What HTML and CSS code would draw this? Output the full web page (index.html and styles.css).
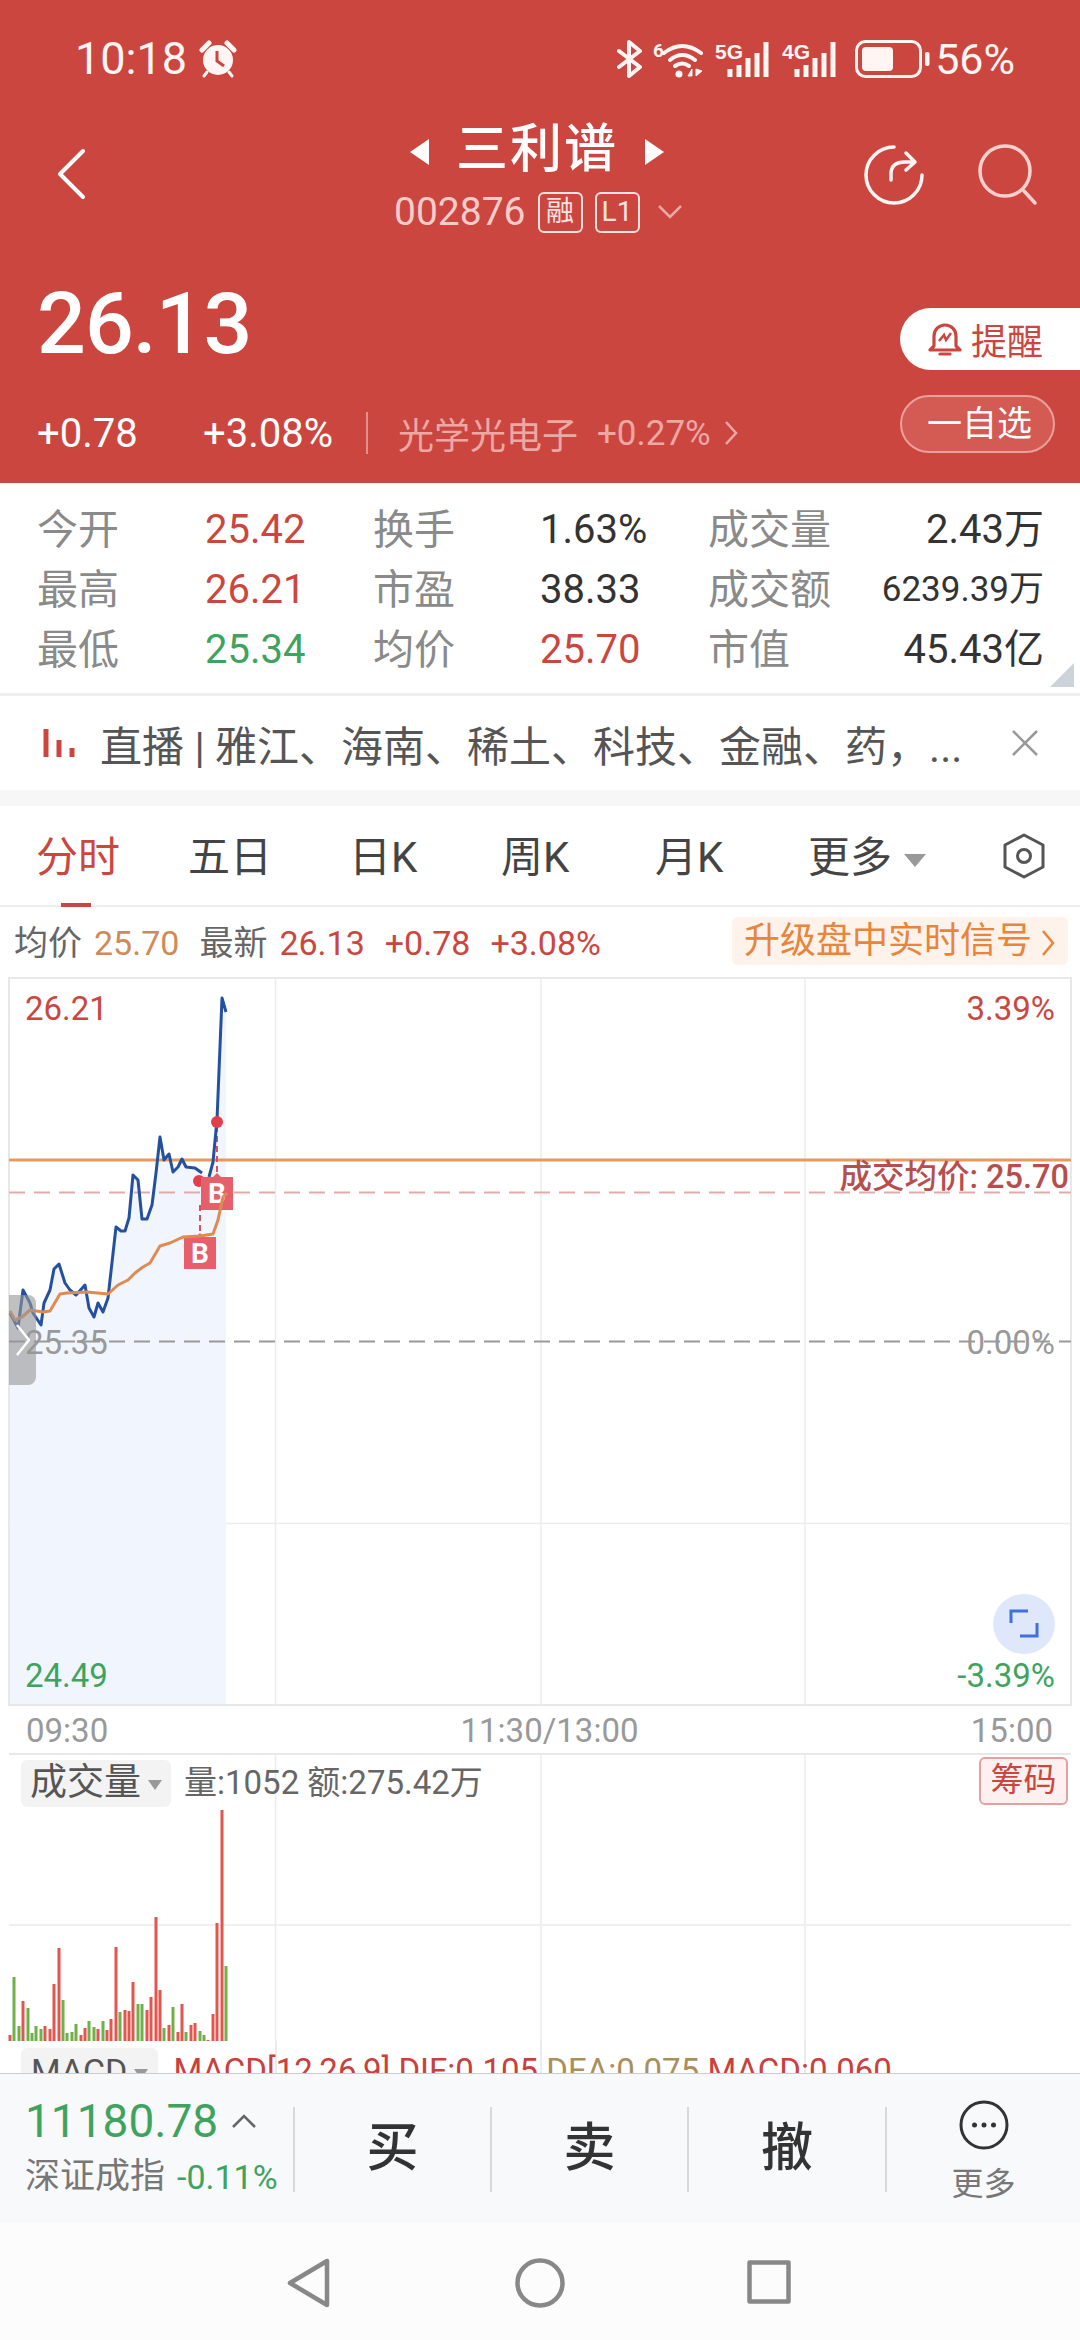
FILE: index.html
```html
<!DOCTYPE html>
<html lang="zh-CN">
<head>
  <meta charset="UTF-8" />
  <meta name="viewport" content="width=device-width, initial-scale=1.0"/>
  <title>三利谱 002876</title>
  <link rel="stylesheet" href="styles.css">
</head>
<body>
  <!-- Red quote header -->
  <div class="quote-head">
    <div class="statusbar">
      <div class="status-left">
        <span class="clock">10:18</span>
        <svg class="alarm" width="38" height="38" viewBox="0 0 38 38">
          <circle cx="19" cy="20" r="15" fill="#fff5f3"/>
          <path d="M3 10 L10 3 M35 10 L28 3" stroke="#fff5f3" stroke-width="5" stroke-linecap="round"/>
          <path d="M8 32 L5 36 M30 32 L33 36" stroke="#fff5f3" stroke-width="3" stroke-linecap="round"/>
          <path d="M18 11 V21 L25 26" stroke="#cc4640" stroke-width="3" fill="none"/>
        </svg>
      </div>
      <div class="status-right">
        <svg class="st-bt" width="26" height="38" viewBox="0 0 26 38">
          <path d="M2 11 L23 27 L12 36 V2 L23 11 L2 27" fill="none" stroke="#fff5f3" stroke-width="4" stroke-linejoin="round" stroke-linecap="round"/>
        </svg>
        <svg class="st-wifi" width="52" height="38" viewBox="0 0 52 38">
          <text x="1" y="17" class="st-small">6</text>
          <path d="M12 13 Q30 -1 49 13" fill="none" stroke="#fff5f3" stroke-width="4" stroke-linecap="round"/>
          <path d="M18 20 Q30 10 43 20" fill="none" stroke="#fff5f3" stroke-width="4" stroke-linecap="round"/>
          <path d="M23 26 Q30 21 37 26" fill="none" stroke="#fff5f3" stroke-width="4" stroke-linecap="round"/>
          <circle cx="27" cy="34" r="3.5" fill="#fff5f3"/>
          <path d="M36 36 L40 29 V36 Z M44 29 V36 L50 31 Z" fill="#fff5f3" stroke="#fff5f3"/>
        </svg>
        <svg class="st-sig" width="58" height="38" viewBox="0 0 58 38">
          <text x="0" y="19" class="st-net">5G</text>
          <path d="M15 37 V29 M24 37 V25 M33 37 V18 M42 37 V13 M51 37 V2" stroke="#fff5f3" stroke-width="5"/>
        </svg>
        <svg class="st-sig" width="58" height="38" viewBox="0 0 58 38">
          <text x="0" y="19" class="st-net">4G</text>
          <path d="M15 37 V29 M24 37 V25 M33 37 V18 M42 37 V13 M51 37 V2" stroke="#fff5f3" stroke-width="5"/>
        </svg>
        <svg class="st-bat" width="76" height="38" viewBox="0 0 76 38">
          <rect x="1.5" y="1.5" width="64" height="35" rx="9" fill="none" stroke="#fff5f3" stroke-width="3"/>
          <rect x="7" y="7" width="31" height="24" rx="4" fill="#fff5f3"/>
          <rect x="70" y="12" width="4.5" height="14" rx="2" fill="#fff5f3"/>
        </svg>
        <span class="battery-num">56%</span>
      </div>
    </div>

    <div class="titlebar">
      <svg class="back" width="32" height="52" viewBox="0 0 32 52">
        <path d="M28 3 L5 26 L28 49" fill="none" stroke="#fff" stroke-width="4" stroke-linecap="round" stroke-linejoin="round"/>
      </svg>
      <div class="title-mid">
        <div class="title-name">
          <span class="tri-left"></span>
          <span class="name">三利谱</span>
          <span class="tri-right"></span>
        </div>
        <div class="title-code">
          <span class="code">002876</span>
          <span class="tag">融</span>
          <span class="tag">L1</span>
          <svg width="24" height="14" viewBox="0 0 24 14"><path d="M1 1 L12 12 L23 1" fill="none" stroke="#eda8a4" stroke-width="2.5"/></svg>
        </div>
      </div>
      <svg class="share" width="62" height="62" viewBox="0 0 62 62">
        <path d="M31 3 A28 28 0 1 0 59 31" fill="none" stroke="#fff5f3" stroke-width="3.5" stroke-linecap="round"/>
        <path d="M28 36 V30 Q28 18 42 18 H50 M43 9 L52 18 L43 26" fill="none" stroke="#fff5f3" stroke-width="3.5" stroke-linecap="round" stroke-linejoin="round"/>
      </svg>
      <svg class="search" width="62" height="62" viewBox="0 0 62 62">
        <circle cx="28" cy="27" r="25" fill="none" stroke="#f9d0cd" stroke-width="3.5"/>
        <path d="M47 47 L58 59" stroke="#f9d0cd" stroke-width="3.5" stroke-linecap="round"/>
      </svg>
    </div>

    <div class="price-wrap">
      <div class="price-left">
        <div class="price">26.13</div>
        <div class="change-row">
          <span class="chg-a">+0.78</span>
          <span class="chg-b">+3.08%</span>
          <span class="chg-line"></span>
          <span class="sector">光学光电子</span>
          <span class="sector-pct">+0.27%</span>
          <svg width="14" height="24" viewBox="0 0 14 24"><path d="M2 1 L12 12 L2 23" fill="none" stroke="#eda8a4" stroke-width="2.5"/></svg>
        </div>
      </div>
      <div class="price-right">
        <div class="remind">
          <svg width="34" height="36" viewBox="0 0 34 36">
            <path d="M6 25 V15 A11 11 0 0 1 28 15 V25 L32 29 H2 Z" fill="none" stroke="#cc4640" stroke-width="3.2" stroke-linejoin="round"/>
            <path d="M12 33 H22" stroke="#cc4640" stroke-width="3.2" stroke-linecap="round"/>
            <path d="M11 20 L16 14 L18 19 L23 12" fill="none" stroke="#cc4640" stroke-width="2.5"/>
          </svg>
          <span>提醒</span>
        </div>
        <div class="watch">一自选</div>
      </div>
    </div>
  </div>

  <!-- Day statistics -->
  <div class="stats">
    <span class="lb">今开</span><span class="val red">25.42</span>
    <span class="lb">换手</span><span class="val">1.63%</span>
    <span class="lb">成交量</span><span class="val end">2.43万</span>
    <span class="lb">最高</span><span class="val red">26.21</span>
    <span class="lb">市盈</span><span class="val">38.33</span>
    <span class="lb">成交额</span><span class="val end small">6239.39万</span>
    <span class="lb">最低</span><span class="val green">25.34</span>
    <span class="lb">均价</span><span class="val red">25.70</span>
    <span class="lb">市值</span><span class="val end">45.43亿</span>
    <span class="corner"></span>
  </div>

  <!-- Live banner -->
  <div class="live">
    <svg width="34" height="30" viewBox="0 0 34 30">
      <path d="M3 1 V29 M16 12 V29 M29 20 V29" stroke="#cc4640" stroke-width="5"/>
    </svg>
    <span class="live-text">直播 | 雅江、海南、稀土、科技、金融、药，...</span>
    <svg class="live-x" width="28" height="26" viewBox="0 0 28 26">
      <path d="M2 1 L26 25 M26 1 L2 25" stroke="#999" stroke-width="2.5"/>
    </svg>
  </div>
  <div class="band"></div>

  <!-- Period tabs -->
  <div class="tabs">
    <span class="tab active">分时</span>
    <span class="tab">五日</span>
    <span class="tab">日K</span>
    <span class="tab">周K</span>
    <span class="tab">月K</span>
    <span class="tab more">更多<i class="drop"></i></span>
    <svg class="hex" width="44" height="46" viewBox="0 0 44 46">
      <path d="M22 2 L41 12 V34 L22 44 L3 34 V12 Z" fill="none" stroke="#555" stroke-width="3" stroke-linejoin="round"/>
      <circle cx="22" cy="23" r="6.5" fill="none" stroke="#555" stroke-width="3"/>
    </svg>
  </div>

  <div class="inforow">
    <span class="gray">均价</span><span class="orange">25.70</span>
    <span class="gray">最新</span><span class="red">26.13</span>
    <span class="red">+0.78</span>
    <span class="red">+3.08%</span>
    <span class="upgrade">升级盘中实时信号
      <svg width="14" height="26" viewBox="0 0 14 26"><path d="M2 1 L12 13 L2 25" fill="none" stroke="#e8843c" stroke-width="2.5"/></svg>
    </span>
  </div>

  <!-- Intraday price chart, drawn in page coordinates -->
  <div class="chart">
    <svg class="chart-svg" width="1080" height="729" viewBox="0 977 1080 729">
      <path class="frame" d="M9 978 H1071 V1705 H9 Z"/>
      <path class="grid" d="M275.5 978 V1705 M541 978 V1705 M805 978 V1705 M9 1523.5 H1071"/>
      <path class="area" d="M10 1313 L18 1328 L23 1290 L30 1303 L33 1313 L41 1325 L44 1303 L50 1290 L54 1269 L59 1264 L65 1283 L70 1290 L76 1295 L85 1285 L89 1308 L94 1317 L98 1303 L103 1312 L108 1298 L116 1227 L121 1231 L125 1231 L129 1218 L133 1175 L138 1180 L142 1219 L147 1219 L152 1205 L156 1173 L160 1137 L164 1160 L169 1154 L173 1172 L178 1167 L182 1159 L186 1167 L195 1168 L202 1173 L209 1177 L213 1162 L217 1120 L222 998 L226 1012 V1704 H10 Z"/>
      <path class="avg-level" d="M9 1160 H1071"/>
      <path class="cost-level" d="M9 1192.5 H1071"/>
      <path class="zero-level" d="M9 1341.5 H1071"/>
      <path class="link" d="M217 1126 V1180 M200 1205 V1238"/>
      <path class="price-line" d="M10 1313 L18 1328 L23 1290 L30 1303 L33 1313 L41 1325 L44 1303 L50 1290 L54 1269 L59 1264 L65 1283 L70 1290 L76 1295 L85 1285 L89 1308 L94 1317 L98 1303 L103 1312 L108 1298 L116 1227 L121 1231 L125 1231 L129 1218 L133 1175 L138 1180 L142 1219 L147 1219 L152 1205 L156 1173 L160 1137 L164 1160 L169 1154 L173 1172 L178 1167 L182 1159 L186 1167 L195 1168 L202 1173 M209 1177 L213 1162 L217 1120 L222 998 L226 1012"/>
      <circle class="dot" cx="199" cy="1181" r="6"/>
      <circle class="dot" cx="217" cy="1122" r="6"/>
      <g class="mark">
        <path d="M201 1177 H213 L217 1173 L221 1177 H233 V1210 H201 Z"/>
        <path d="M184 1237 H196 L200 1233 L204 1237 H216 V1269 H184 Z"/>
      </g>
      <text class="mark-b" x="217" y="1203">B</text>
      <text class="mark-b" x="200" y="1263">B</text>
      <path class="avg-line" d="M10 1311 L15 1320 L22 1317 L30 1310 L43 1312 L50 1311 L60 1294 L67 1293 L87 1292 L108 1294 L118 1285 L128 1280 L135 1273 L143 1267 L150 1263 L160 1246 L170 1243 L183 1237 L200 1236 L213 1234 L218 1220 L223 1197 L227 1193"/>
    </svg>
    <span class="axis left top red">26.21</span>
    <span class="axis right top red">3.39%</span>
    <span class="cost-tag">成交均价: 25.70</span>
    <span class="axis left mid gray">25.35</span>
    <span class="axis right mid gray">0.00%</span>
    <span class="axis left low green">24.49</span>
    <span class="axis right low green">-3.39%</span>
    <div class="handle">
      <svg width="16" height="34" viewBox="0 0 16 34"><path d="M2 2 L14 17 L2 32" fill="none" stroke="#fff" stroke-width="2.5"/></svg>
    </div>
    <div class="expand">
      <svg width="30" height="30" viewBox="0 0 30 30">
        <path d="M2 14 V2 H19 M28 14 V27 H11" fill="none" stroke="#3f6fe0" stroke-width="3"/>
      </svg>
    </div>
  </div>

  <div class="times">
    <span>09:30</span>
    <span>11:30/13:00</span>
    <span>15:00</span>
  </div>

  <!-- Volume panel -->
  <div class="volume">
    <svg class="volume-svg" width="1080" height="288" viewBox="0 1753 1080 288">
      <path class="frame-top" d="M9 1754 H1071"/>
      <path class="grid" d="M275.5 1754 V2041 M541 1754 V2041 M805 1754 V2041 M9 1925 H1071"/>
      <path class="bar-up" d="M10 2043v-8M23 2043v-42M45 2043v-17M50 2043v-14M54 2043v-59M59 2043v-95M81 2043v-8M85 2043v-15M98 2043v-14M107 2043v-13M111 2043v-24M116 2043v-96M125 2043v-33M129 2043v-32M133 2043v-61M147 2043v-33M151 2043v-46M156 2043v-126M160 2043v-53M169 2043v-18M178 2043v-11M182 2043v-39M191 2043v-18M195 2043v-20M208 2043v-3M213 2043v-29M217 2043v-120M222 2043v-233"/>
      <path class="bar-down" d="M14 2043v-66M19 2043v-17M28 2043v-35M32 2043v-10M36 2043v-17M41 2043v-14M63 2043v-43M67 2043v-10M72 2043v-11M76 2043v-19M89 2043v-22M94 2043v-16M103 2043v-22M120 2043v-31M138 2043v-39M142 2043v-39M164 2043v-15M173 2043v-36M186 2043v-11M200 2043v-12M204 2043v-8M226 2043v-77"/>
    </svg>
    <div class="vol-head">
      <span class="selector">成交量<i class="drop small-drop"></i></span>
      <span class="vol-text">量:1052 额:275.42万</span>
      <span class="chips">筹码</span>
    </div>
  </div>

  <!-- MACD panel, cut off by the toolbar -->
  <div class="macd">
    <span class="selector macd-sel">MACD<i class="drop small-drop"></i></span>
    <span class="macd-text"><span class="m-red">MACD[12,26,9] DIF:0.105</span> <span class="m-tan">DEA:0.075</span> <span class="m-red">MACD:0.060</span></span>
  </div>

  <!-- Bottom toolbar -->
  <div class="toolbar">
    <div class="index-box">
      <div class="index-top">
        <span class="index-num">11180.78</span>
        <svg width="24" height="14" viewBox="0 0 24 14"><path d="M1 13 L12 2 L23 13" fill="none" stroke="#666" stroke-width="2.5"/></svg>
      </div>
      <div class="index-sub"><span class="index-name">深证成指</span><span class="index-pct">-0.11%</span></div>
    </div>
    <div class="trade">买</div>
    <div class="trade">卖</div>
    <div class="trade">撤</div>
    <div class="more-box">
      <svg width="50" height="50" viewBox="0 0 50 50">
        <circle cx="25" cy="25" r="23" fill="none" stroke="#333" stroke-width="3"/>
        <circle cx="15.5" cy="25" r="2.5" fill="#333"/><circle cx="25" cy="25" r="2.5" fill="#333"/><circle cx="34.5" cy="25" r="2.5" fill="#333"/>
      </svg>
      <span>更多</span>
    </div>
  </div>

  <!-- System navigation -->
  <div class="sysnav">
    <svg width="44" height="50" viewBox="0 0 44 50"><path d="M40 3 V47 L3 25 Z" fill="none" stroke="#888" stroke-width="4.5" stroke-linejoin="round"/></svg>
    <svg width="50" height="50" viewBox="0 0 50 50"><circle cx="25" cy="25" r="22.5" fill="none" stroke="#888" stroke-width="4.5"/></svg>
    <svg width="44" height="44" viewBox="0 0 44 44"><path d="M2.5 2.5 H41.5 V41.5 H2.5 Z" fill="none" stroke="#888" stroke-width="4.5" stroke-linejoin="round"/></svg>
  </div>
</body>
</html>
```

FILE: styles.css
```css
* {
  box-sizing: border-box;
}

body {
  margin: 0;
  width: 1080px;
  height: 2340px;
  overflow: hidden;
  background: #fff;
  font-family: Roboto, "Noto Sans CJK SC", sans-serif;
  color: #333;
}

.red { color: #cc4640; }
.green { color: #3fa35f; }
.gray { color: #666; }
.orange { color: #d08a5a; }

/* header */
.quote-head {
  height: 483px;
  background: #cc4640;
  color: #fff;
}
.statusbar {
  height: 98px;
  padding: 40px 65px 0 75px;
  display: flex;
  justify-content: space-between;
}
.status-left {
  display: flex;
  align-items: center;
  gap: 12px;
  height: 38px;
}
.clock {
  font-size: 45px;
  line-height: 38px;
  color: #fff5f3;
}
.status-right {
  display: flex;
  align-items: center;
  height: 38px;
}
.st-wifi { margin-left: 9px; }
.st-sig { margin-left: 11px; }
.st-sig + .st-sig { margin-left: 9px; }
.st-bat { margin-left: 15px; }
.st-small {
  font: 700 19px Roboto, sans-serif;
  fill: #fff5f3;
}
.st-net {
  font: 700 21px "Liberation Sans", sans-serif;
  fill: #fff5f3;
}
.battery-num {
  margin-left: 4px;
  font-size: 43px;
  line-height: 38px;
  color: #fff5f3;
}

.titlebar {
  height: 134px;
  position: relative;
  display: flex;
  padding-left: 55px;
}
.back { margin-top: 50px; }
.title-mid {
  position: absolute;
  left: 394px;
  top: 24px;
}
.title-name {
  display: flex;
  align-items: center;
  gap: 27px;
  margin-left: 16px;
  height: 56px;
}
.tri-left, .tri-right {
  width: 0;
  height: 0;
  margin-top: 4px;
  border-top: 13px solid transparent;
  border-bottom: 13px solid transparent;
}
.tri-left { border-right: 19px solid #fff; }
.tri-right { border-left: 19px solid #fff; }
.name {
  font-size: 52px;
  line-height: 56px;
  font-weight: 500;
  letter-spacing: 2px;
}
.title-code {
  display: flex;
  align-items: center;
  gap: 12px;
  margin-top: 13px;
}
.code {
  font-size: 39px;
  line-height: 42px;
  color: #f6cdca;
}
.tag {
  width: 45px;
  height: 41px;
  border: 2px solid #fbe3e1;
  border-radius: 6px;
  font-size: 28px;
  line-height: 36px;
  text-align: center;
  color: #fbe3e1;
}
.title-code svg { margin-left: 6px; }
.share { position: absolute; left: 863px; top: 46px; }
.search { position: absolute; left: 977px; top: 46px; }

.price-wrap {
  display: flex;
  justify-content: space-between;
}
.price {
  margin: 47px 0 0 37px;
  font-size: 86px;
  line-height: 90px;
  font-weight: 500;
  letter-spacing: -1px;
}
.change-row {
  display: flex;
  align-items: center;
  margin: 44px 0 0 37px;
  height: 40px;
}
.chg-a { font-size: 40px; width: 166px; }
.chg-b { font-size: 40px; width: 163px; }
.chg-line {
  width: 2px;
  height: 42px;
  background: #e58f8a;
  margin-right: 30px;
}
.sector {
  font-size: 36px;
  color: #eda8a4;
}
.sector-pct {
  font-size: 35px;
  color: #eda8a4;
  margin: 0 13px 0 19px;
}
.price-right {
  width: 180px;
  padding-top: 76px;
}
.remind {
  height: 62px;
  background: #fff;
  border-radius: 31px 0 0 31px;
  display: flex;
  align-items: center;
  gap: 9px;
  padding-left: 28px;
  color: #cc4640;
  font-size: 36px;
}
.watch {
  width: 155px;
  height: 58px;
  margin-top: 25px;
  padding-left: 4px;
  border: 2px solid #ec9f9b;
  border-radius: 29px;
  background: #d45a54;
  text-align: center;
  font-size: 35px;
  line-height: 56px;
}

/* stats */
.stats {
  position: relative;
  height: 213px;
  padding: 17px 0 0 37px;
  border-bottom: 3px solid #eee;
  display: grid;
  grid-template-columns: 168px 168px 167px 168px 130px 206px;
  grid-auto-rows: 60px;
  align-items: center;
}
.lb {
  font-size: 41px;
  line-height: 50px;
  color: #8a8a8a;
  white-space: nowrap;
}
.val {
  font-size: 40px;
  line-height: 50px;
  color: #333;
}
.val.red { color: #cc4640; }
.val.green { color: #3fa35f; }
.val.end { text-align: right; }
.val.small { font-size: 35px; }
.corner {
  position: absolute;
  right: 6px;
  bottom: 6px;
  width: 24px;
  height: 24px;
  background: #ccd3da;
  clip-path: polygon(100% 0, 100% 100%, 0 100%);
}

/* banner */
.live {
  height: 94px;
  display: flex;
  align-items: center;
  padding-left: 43px;
}
.live-text {
  margin-left: 23px;
  font-size: 42px;
  color: #555;
  white-space: nowrap;
}
.live-x { margin-left: auto; margin-right: 41px; }
.band {
  height: 16px;
  background: #f7f7f7;
}

/* tabs */
.tabs {
  position: relative;
  height: 101px;
  padding: 23px 0 0 36px;
  border-bottom: 2px solid #eee;
  display: grid;
  grid-template-columns: 152px 161px 152px 154px 153px 1fr;
  align-items: start;
}
.tab {
  font-size: 42px;
  line-height: 58px;
  color: #444;
  position: relative;
  white-space: nowrap;
}
.tab.active { color: #cc4640; }
.tab.active::after {
  content: "";
  position: absolute;
  left: 25px;
  top: 74px;
  width: 30px;
  height: 4px;
  background: #cc4640;
}
.drop {
  display: inline-block;
  width: 0;
  height: 0;
  margin-left: 12px;
  vertical-align: middle;
  border-left: 11px solid transparent;
  border-right: 11px solid transparent;
  border-top: 13px solid #999;
}
.small-drop {
  margin-left: 7px;
  border-left-width: 7px;
  border-right-width: 7px;
  border-top-width: 10px;
}
.hex {
  position: absolute;
  left: 1002px;
  top: 27px;
}

.inforow {
  height: 70px;
  padding: 11px 12px 0 14px;
  display: flex;
  align-items: flex-start;
  font-size: 34px;
  line-height: 50px;
  gap: 20px;
}
.inforow .gray + span { margin-left: -8px; }
.upgrade {
  margin-left: auto;
  width: 336px;
  height: 48px;
  margin-top: -1px;
  border-radius: 6px;
  background: #fdf3ea;
  color: #e8843c;
  font-size: 36px;
  line-height: 48px;
  padding-left: 12px;
  white-space: nowrap;
}
.upgrade svg { vertical-align: -3px; }

/* price chart */
.chart {
  position: relative;
  height: 729px;
}
.chart-svg, .volume-svg {
  display: block;
}
.frame {
  fill: none;
  stroke: #e8e8e8;
  stroke-width: 2;
}
.grid {
  fill: none;
  stroke: #ececec;
  stroke-width: 1.5;
}
.area { fill: #f0f5fe; }
.avg-level {
  stroke: #e59a5e;
  stroke-width: 3;
}
.cost-level {
  stroke: #e3aaaa;
  stroke-width: 2;
  stroke-dasharray: 16 9;
}
.zero-level {
  stroke: #999;
  stroke-width: 2;
  stroke-dasharray: 16 9;
}
.link {
  stroke: #d9505a;
  stroke-width: 2;
  stroke-dasharray: 6 4;
}
.price-line {
  fill: none;
  stroke: #24509f;
  stroke-width: 3;
  stroke-linejoin: round;
}
.avg-line {
  fill: none;
  stroke: #e08a50;
  stroke-width: 3;
  stroke-linejoin: round;
}
.dot { fill: #e1404a; }
.mark { fill: #e5606a; }
.mark-b {
  font: 700 28px Roboto, sans-serif;
  fill: #fff;
  text-anchor: middle;
}

.axis {
  position: absolute;
  font-size: 33px;
  line-height: 36px;
}
.axis.left { left: 25px; }
.axis.right { right: 25px; }
.axis.top { top: 14px; }
.axis.mid { top: 348px; color: #999; }
.axis.low { top: 681px; }
.cost-tag {
  position: absolute;
  right: 11px;
  top: 181px;
  font-size: 32.5px;
  line-height: 38px;
  font-weight: 500;
  color: #b84d4d;
}
.handle {
  position: absolute;
  left: 9px;
  top: 318px;
  width: 27px;
  height: 90px;
  background: rgba(150, 150, 150, 0.6);
  border-radius: 0 8px 8px 0;
  display: flex;
  align-items: center;
  justify-content: center;
}
.expand {
  position: absolute;
  left: 993px;
  top: 617px;
  width: 62px;
  height: 60px;
  border-radius: 50%;
  background: #dfe8fa;
  display: flex;
  align-items: center;
  justify-content: center;
}

.times {
  height: 47px;
  padding: 0 27px 0 26px;
  display: flex;
  justify-content: space-between;
  font-size: 33px;
  line-height: 50px;
  color: #999;
}
.times span:nth-child(2) { margin-left: 20px; }

/* volume */
.volume {
  position: relative;
  height: 288px;
}
.frame-top {
  stroke: #e8e8e8;
  stroke-width: 2;
}
.bar-up {
  stroke: #e2564f;
  stroke-width: 3;
}
.bar-down {
  stroke: #6fb04a;
  stroke-width: 3;
}
.vol-head {
  position: absolute;
  left: 21px;
  top: 7px;
  width: 1047px;
  display: flex;
}
.selector {
  height: 47px;
  border-radius: 6px;
  background: #f3f3f3;
  font-size: 37px;
  line-height: 46px;
  color: #555;
  padding: 0 9px;
  white-space: nowrap;
}
.vol-text {
  margin-left: 13px;
  font-size: 33px;
  line-height: 46px;
  color: #666;
}
.chips {
  margin-left: auto;
  width: 89px;
  height: 48px;
  margin-top: -3px;
  border: 2px solid #e5a0a0;
  border-radius: 6px;
  background: #fdf0f0;
  color: #cc4640;
  font-size: 33px;
  line-height: 42px;
  text-align: center;
}

/* macd */
.macd {
  height: 32px;
  overflow: hidden;
  padding: 7px 0 0 21px;
  display: flex;
  background-image:
    linear-gradient(#ececec, #ececec),
    linear-gradient(#ececec, #ececec),
    linear-gradient(#ececec, #ececec);
  background-size: 2px 100%;
  background-repeat: no-repeat;
  background-position: 275px 0, 540px 0, 804px 0;
}
.macd-sel {
  flex: none;
  font-size: 34px;
  padding: 0 10px;
}
.macd-text {
  margin-left: 15px;
  font-size: 33px;
  line-height: 46px;
  white-space: nowrap;
}
.m-red { color: #c9403c; }
.m-tan { color: #a98f5c; }

/* toolbar */
.toolbar {
  height: 150px;
  background: #f8f9fb;
  border-top: 1px solid #ccc;
  display: grid;
  grid-template-columns: 295px 197px 197px 198px 1fr;
  align-items: start;
  padding-top: 33px;
}
.index-box {
  height: 85px;
  padding-left: 25px;
  border-right: 2px solid #d8d8d8;
}
.index-top {
  display: flex;
  align-items: center;
  gap: 14px;
  margin-top: -9px;
}
.index-num {
  font-size: 46px;
  line-height: 46px;
  color: #3fa35f;
}
.index-sub {
  display: flex;
  align-items: center;
  gap: 12px;
  margin-top: 8px;
}
.index-name {
  font-size: 35px;
  line-height: 50px;
  color: #777;
}
.index-pct {
  font-size: 34px;
  color: #3fa35f;
}
.trade {
  height: 85px;
  border-right: 2px solid #d8d8d8;
  text-align: center;
  font-size: 52px;
  line-height: 84px;
  font-weight: 500;
}
.more-box {
  display: flex;
  flex-direction: column;
  align-items: center;
  margin-top: -7px;
  font-size: 32px;
  line-height: 46px;
  color: #777;
}
.more-box span { margin-top: 11px; }

/* system nav */
.sysnav {
  height: 117px;
  background: #fcfcfd;
  position: relative;
}
.sysnav svg {
  position: absolute;
  top: 35px;
}
.sysnav svg:nth-child(1) { left: 287px; }
.sysnav svg:nth-child(2) { left: 515px; }
.sysnav svg:nth-child(3) { left: 747px; top: 37px; }
```
